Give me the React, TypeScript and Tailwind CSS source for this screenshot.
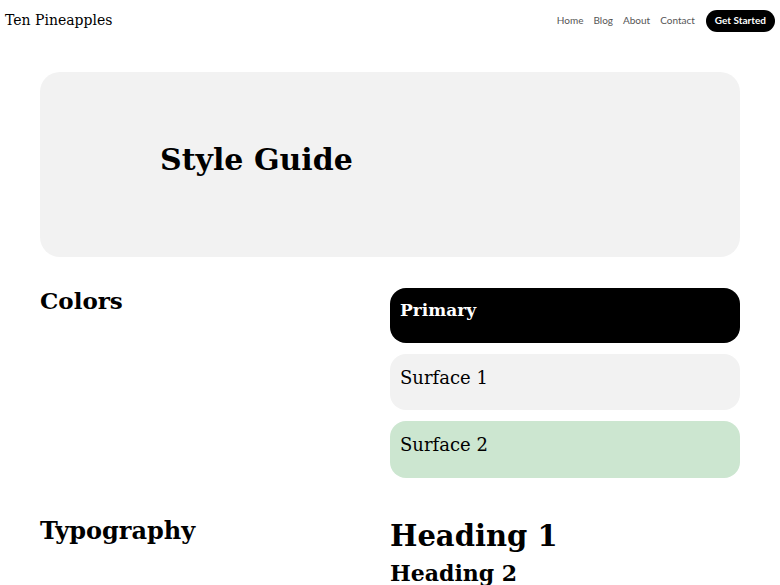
import React from "react";

const serif = { fontFamily: '"DejaVu Serif", "Liberation Serif", serif' };

export default function App() {
  return (
    <div className="min-h-screen bg-white text-black">
      <header className="flex items-center justify-between h-[41px] pl-[5px] pr-[5px]">
        <div className="text-[14px] font-normal" style={serif}>Ten Pineapples</div>
        <nav className="flex items-center gap-[10px] text-[10px] text-[#555]" style={{ fontFamily: 'Lato, sans-serif' }}>
          <span>Home</span>
          <span>Blog</span>
          <span>About</span>
          <span className="mr-[1px]">Contact</span>
          <span className="bg-black text-white font-bold rounded-full h-[22px] px-[9px] flex items-center">Get Started</span>
        </nav>
      </header>
      <main className="px-[40px]">
        <section className="mt-[31px] h-[185px] rounded-[20px] bg-[#f2f2f2] flex items-center pl-[120px] pb-[10px]">
          <h1 className="text-[30px] font-bold" style={serif}>Style Guide</h1>
        </section>
        <section className="mt-[31px] grid grid-cols-2 gap-0">
          <h2 className="text-[23px] font-bold leading-[24px] pt-[1px]" style={serif}>Colors</h2>
          <div className="flex flex-col gap-[11px]">
            <div className="h-[55px] rounded-[16px] bg-black text-white px-[10px] pt-[10px] text-[17px] font-bold" style={serif}>Primary</div>
            <div className="h-[56px] rounded-[16px] bg-[#f2f2f2] px-[10px] pt-[10px] text-[18px]" style={serif}>Surface 1</div>
            <div className="h-[57px] rounded-[16px] bg-[#cce6d0] px-[10px] pt-[10px] text-[18px]" style={serif}>Surface 2</div>
          </div>
        </section>
        <section className="mt-[36px] grid grid-cols-2">
          <h2 className="text-[24px] font-bold leading-[32px] pt-[1px]" style={serif}>Typography</h2>
          <div className="flex flex-col pt-[2px]">
            <div className="text-[29px] font-bold leading-[41px]" style={serif}>Heading 1</div>
            <div className="text-[22px] font-bold leading-[32px]" style={serif}>Heading 2</div>
          </div>
        </section>
      </main>
    </div>
  );
}
